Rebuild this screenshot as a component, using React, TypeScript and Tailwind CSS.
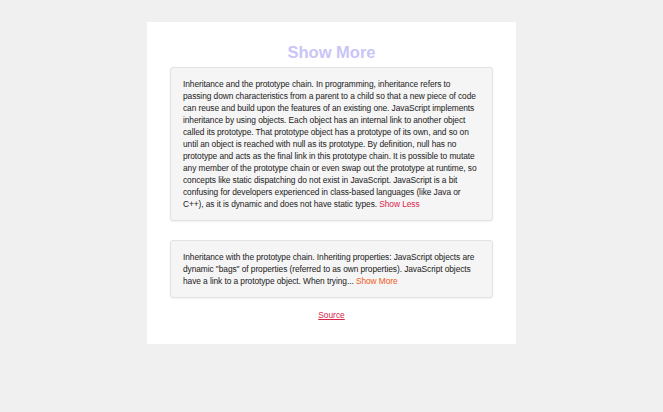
import React from "react";

export default function App() {
  return (
    <div className="min-h-screen w-full bg-[#f0f0f0] pt-[22px] font-['Liberation_Sans',Arial,sans-serif]">
      <div className="mx-auto w-[369px] bg-white px-[23px] pt-[21px] pb-[23px]">
        <h2 className="text-center text-[16.5px] font-bold leading-[19px] text-[#cac5f7] mb-[5px]">
          Show More
        </h2>
        <div className="rounded-[3px] border border-[#e2e2e2] bg-[#f5f5f5] px-[12px] py-[10px] text-[8.4px] leading-[12px] tracking-[-0.08px] text-[#222] shadow-[0_1px_2px_rgba(0,0,0,0.06)]">
          Inheritance and the prototype chain. In programming, inheritance refers to passing down characteristics from a parent to a child so that a new piece of code can reuse and build upon the features of an existing one. JavaScript implements inheritance by using objects. Each object has an internal link to another object called its prototype. That prototype object has a prototype of its own, and so on until an object is reached with null as its prototype. By definition, null has no prototype and acts as the final link in this prototype chain. It is possible to mutate any member of the prototype chain or even swap out the prototype at runtime, so concepts like static dispatching do not exist in JavaScript. JavaScript is a bit confusing for developers experienced in class-based languages (like Java or C++), as it is dynamic and does not have static types.{" "}
          <span className="text-[#d9254a]">Show Less</span>
        </div>
        <div className="mt-[19px] rounded-[3px] border border-[#e2e2e2] bg-[#f5f5f5] px-[12px] py-[10px] text-[8.4px] leading-[12px] tracking-[-0.08px] text-[#222] shadow-[0_1px_2px_rgba(0,0,0,0.06)]">
          Inheritance with the prototype chain. Inheriting properties: JavaScript objects are dynamic "bags" of properties (referred to as own properties). JavaScript objects have a link to a prototype object. When trying...{" "}
          <span className="text-[#f2591c]">Show More</span>
        </div>
        <div className="mt-[11px] text-center text-[8.4px] leading-[12px]">
          <a className="text-[#d9254a] underline">Source</a>
        </div>
      </div>
    </div>
  );
}
